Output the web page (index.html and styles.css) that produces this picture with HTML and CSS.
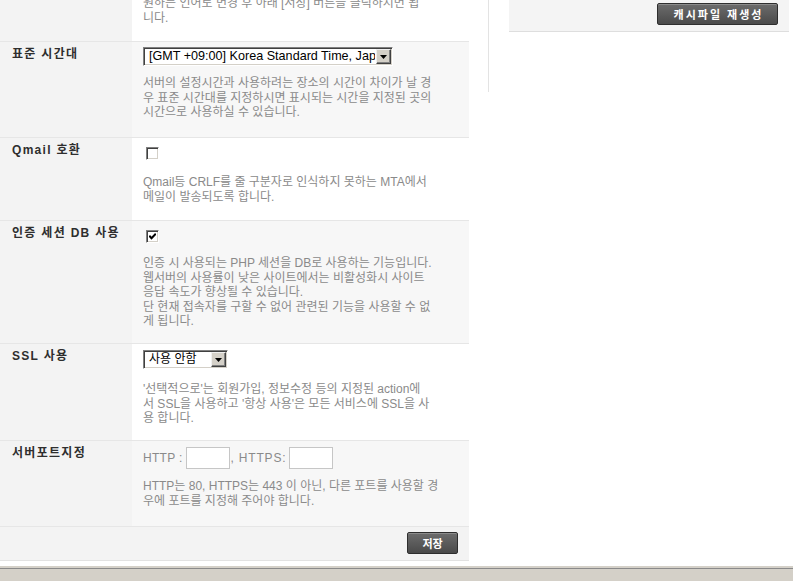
FILE: index.html
```html
<!DOCTYPE html>
<html lang="ko">
<head>
<meta charset="utf-8">
<title>설정</title>
<link rel="stylesheet" href="styles.css">
</head>
<body>
<div class="page">
  <main class="settings">
    <div class="row row-lang">
      <div class="label"></div>
      <div class="value">
        <p class="desc desc-cut">원하는 언어로 변경 후 아래 [저장] 버튼을 클릭하시면 됩<br>니다.</p>
      </div>
    </div>

    <div class="row row-tz alt">
      <div class="label">표준 시간대</div>
      <div class="value">
        <div class="ctrl">
          <span class="select select-tz">
            <select><option>[GMT +09:00] Korea Standard Time, Japan</option></select>
            <span class="arrow"><svg width="7" height="4" viewBox="0 0 7 4"><path d="M0 0h7L3.5 4z"/></svg></span>
          </span>
        </div>
        <p class="desc tight">서버의 설정시간과 사용하려는 장소의 시간이 차이가 날 경<br>우 표준 시간대를 지정하시면 표시되는 시간을 지정된 곳의<br>시간으로 사용하실 수 있습니다.</p>
      </div>
    </div>

    <div class="row row-qmail">
      <div class="label">Qmail 호환</div>
      <div class="value">
        <div class="ctrl"><span class="chk"></span></div>
        <p class="desc loose">Qmail등 CRLF를 줄 구분자로 인식하지 못하는 MTA에서<br>메일이 발송되도록 합니다.</p>
      </div>
    </div>

    <div class="row row-session alt">
      <div class="label">인증 세션 DB 사용</div>
      <div class="value">
        <div class="ctrl"><span class="chk"><svg width="7" height="7" viewBox="0 0 7 7"><path d="M0.3 2.8l2.2 2.4L6.8 0.8" fill="none" stroke="#000" stroke-width="2"/></svg></span></div>
        <p class="desc">인증 시 사용되는 PHP 세션을 DB로 사용하는 기능입니다.<br>웹서버의 사용률이 낮은 사이트에서는 비활성화시 사이트<br>응답 속도가 향상될 수 있습니다.<br>단 현재 접속자를 구할 수 없어 관련된 기능을 사용할 수 없<br>게 됩니다.</p>
      </div>
    </div>

    <div class="row row-ssl">
      <div class="label">SSL 사용</div>
      <div class="value">
        <div class="ctrl ctrl-ssl">
          <span class="select select-ssl">
            <select><option>사용 안함</option><option>선택적으로</option><option>항상 사용</option></select>
            <span class="arrow"><svg width="7" height="4" viewBox="0 0 7 4"><path d="M0 0h7L3.5 4z"/></svg></span>
          </span>
        </div>
        <p class="desc loose">'선택적으로'는 회원가입, 정보수정 등의 지정된 action에<br>서 SSL을 사용하고 '항상 사용'은 모든 서비스에 SSL을 사<br>용 합니다.</p>
      </div>
    </div>

    <div class="row row-port alt">
      <div class="label">서버포트지정</div>
      <div class="value">
        <div class="ctrl ctrl-port">
          <span class="plain">HTTP :</span>
          <input type="text" class="port">
          <span class="plain plain-wide">, HTTPS:</span>
          <input type="text" class="port">
        </div>
        <p class="desc">HTTP는 80, HTTPS는 443 이 아닌, 다른 포트를 사용할 경<br>우에 포트를 지정해 주어야 합니다.</p>
      </div>
    </div>

    <div class="actions">
      <button class="btn btn-save">저장</button>
    </div>
  </main>

  <div class="divider"></div>

  <aside class="side">
    <div class="side-bar">
      <button class="btn btn-cache">캐시파일 재생성</button>
    </div>
  </aside>
</div>
<div class="statusbar"></div>
</body>
</html>
```

FILE: styles.css
```css
* { box-sizing: border-box; }

html, body {
  margin: 0;
  padding: 0;
  background: #fff;
  overflow: hidden;
}

body {
  font-family: "Liberation Sans", "Noto Sans CJK KR", sans-serif;
  font-size: 12px;
  color: #333;
}

.page {
  display: flex;
  align-items: flex-start;
}

.settings {
  width: 469px;
  flex: none;
}

.row {
  display: flex;
  border-bottom: 1px solid #e6e6e6;
}

.row-lang { height: 42px; }
.row-tz { height: 96px; }
.row-qmail { height: 83px; }
.row-session { height: 123px; }
.row-ssl { height: 97px; }
.row-port { height: 86px; }

.label {
  width: 132px;
  flex: none;
  background: #f3f3f3;
  padding: 5px 0 0 12px;
  font-weight: bold;
  line-height: 14.5px;
  letter-spacing: 1.3px;
  color: #2e2e2e;
}

.value {
  flex: 1;
  padding: 5px 0 0 11px;
  background: #fff;
  overflow: hidden;
}

.row.alt .value { background: #f7f7f7; }

.ctrl {
  height: 20px;
  display: flex;
  align-items: flex-start;
}

.ctrl-ssl { margin-top: 1px; }

.ctrl-port {
  margin-top: 1px;
  height: 22px;
  align-items: center;
}

.desc {
  margin: 10px 0 0;
  line-height: 14.5px;
  color: #8a8a8a;
}

.desc.tight { margin-top: 9px; }
.desc.loose { margin-top: 12px; }
.desc.desc-cut { margin-top: -9px; }

/* classic select */
.select {
  position: relative;
  display: inline-block;
  height: 19px;
}

.select select {
  appearance: none;
  -webkit-appearance: none;
  height: 19px;
  margin: 0;
  padding: 0 17px 0 5px;
  border-style: solid;
  border-width: 1px;
  border-color: #808080 #fff #fff #808080;
  box-shadow: inset 1px 1px 0 #404040, inset -1px -1px 0 #d4d0c8;
  background: #fff;
  color: #000;
  border-radius: 0;
  line-height: 17px;
  outline: none;
}

.select-tz select {
  width: 250px;
  font-family: "Liberation Sans", "Noto Sans CJK KR", sans-serif;
  font-size: 12.6px;
}

.select-ssl select {
  width: 85px;
  font-family: "Liberation Sans", "Noto Sans CJK KR", sans-serif;
  font-size: 12px;
  padding-left: 5px;
}

.select .arrow {
  position: absolute;
  right: 2px;
  top: 2px;
  width: 15px;
  height: 15px;
  background: #d4d0c8;
  border-style: solid;
  border-width: 1px;
  border-color: #f0f0f0 #404040 #404040 #f0f0f0;
  box-shadow: inset -1px -1px 0 #808080;
  display: flex;
  align-items: center;
  justify-content: center;
  pointer-events: none;
}

.select .arrow svg { display: block; margin-top: 1px; }

/* classic checkbox */
.chk {
  display: flex;
  align-items: center;
  justify-content: center;
  width: 13px;
  height: 13px;
  margin: 4px 0 0 3px;
  background: #fff;
  border-style: solid;
  border-width: 1px;
  border-color: #808080 #fff #fff #808080;
  box-shadow: inset 1px 1px 0 #404040, inset -1px -1px 0 #d4d0c8;
}

.chk svg { display: block; }

.plain { color: #8a8a8a; letter-spacing: 0.3px; }
.plain-wide { letter-spacing: 0.8px; }

.port {
  width: 44px;
  height: 22px;
  margin: 0 1px 0 3px;
  border: 1px solid #c6c6c6;
  background: #fff;
  padding: 0 2px;
  font: inherit;
}

.actions {
  height: 34px;
  background: #f3f3f3;
  border-bottom: 1px solid #e2e2e2;
  display: flex;
  justify-content: flex-end;
  align-items: flex-start;
  padding: 5px 11px 0 0;
}

.btn {
  height: 22px;
  border: 1px solid #2e2e2e;
  border-radius: 2px;
  background: linear-gradient(#6c6c6c, #4a4a4a);
  box-shadow: inset 0 1px 0 rgba(255,255,255,0.22);
  color: #fff;
  font-family: "Noto Sans CJK KR", sans-serif;
  font-weight: bold;
  font-size: 11px;
  line-height: 20px;
  padding: 0;
  cursor: pointer;
}

.btn-save {
  width: 51px;
}

.btn-cache {
  width: 121px;
  letter-spacing: 2px;
  text-indent: 2px;
}

.divider {
  flex: none;
  width: 1px;
  height: 92px;
  margin-left: 19px;
  background: #e3e3e3;
}

.side {
  flex: none;
  width: 280px;
  margin-left: 20px;
}

.side-bar {
  height: 32px;
  background: #f4f4f4;
  border-bottom: 1px solid #dedede;
  display: flex;
  justify-content: flex-end;
  align-items: flex-start;
  padding: 3px 11px 0 0;
}

.statusbar {
  margin-top: 5px;
  height: 15px;
  background: #d4d0c8;
  box-shadow: inset 0 2px 0 #d4d0c8, inset 0 3px 0 #8a8a8a;
}
```
